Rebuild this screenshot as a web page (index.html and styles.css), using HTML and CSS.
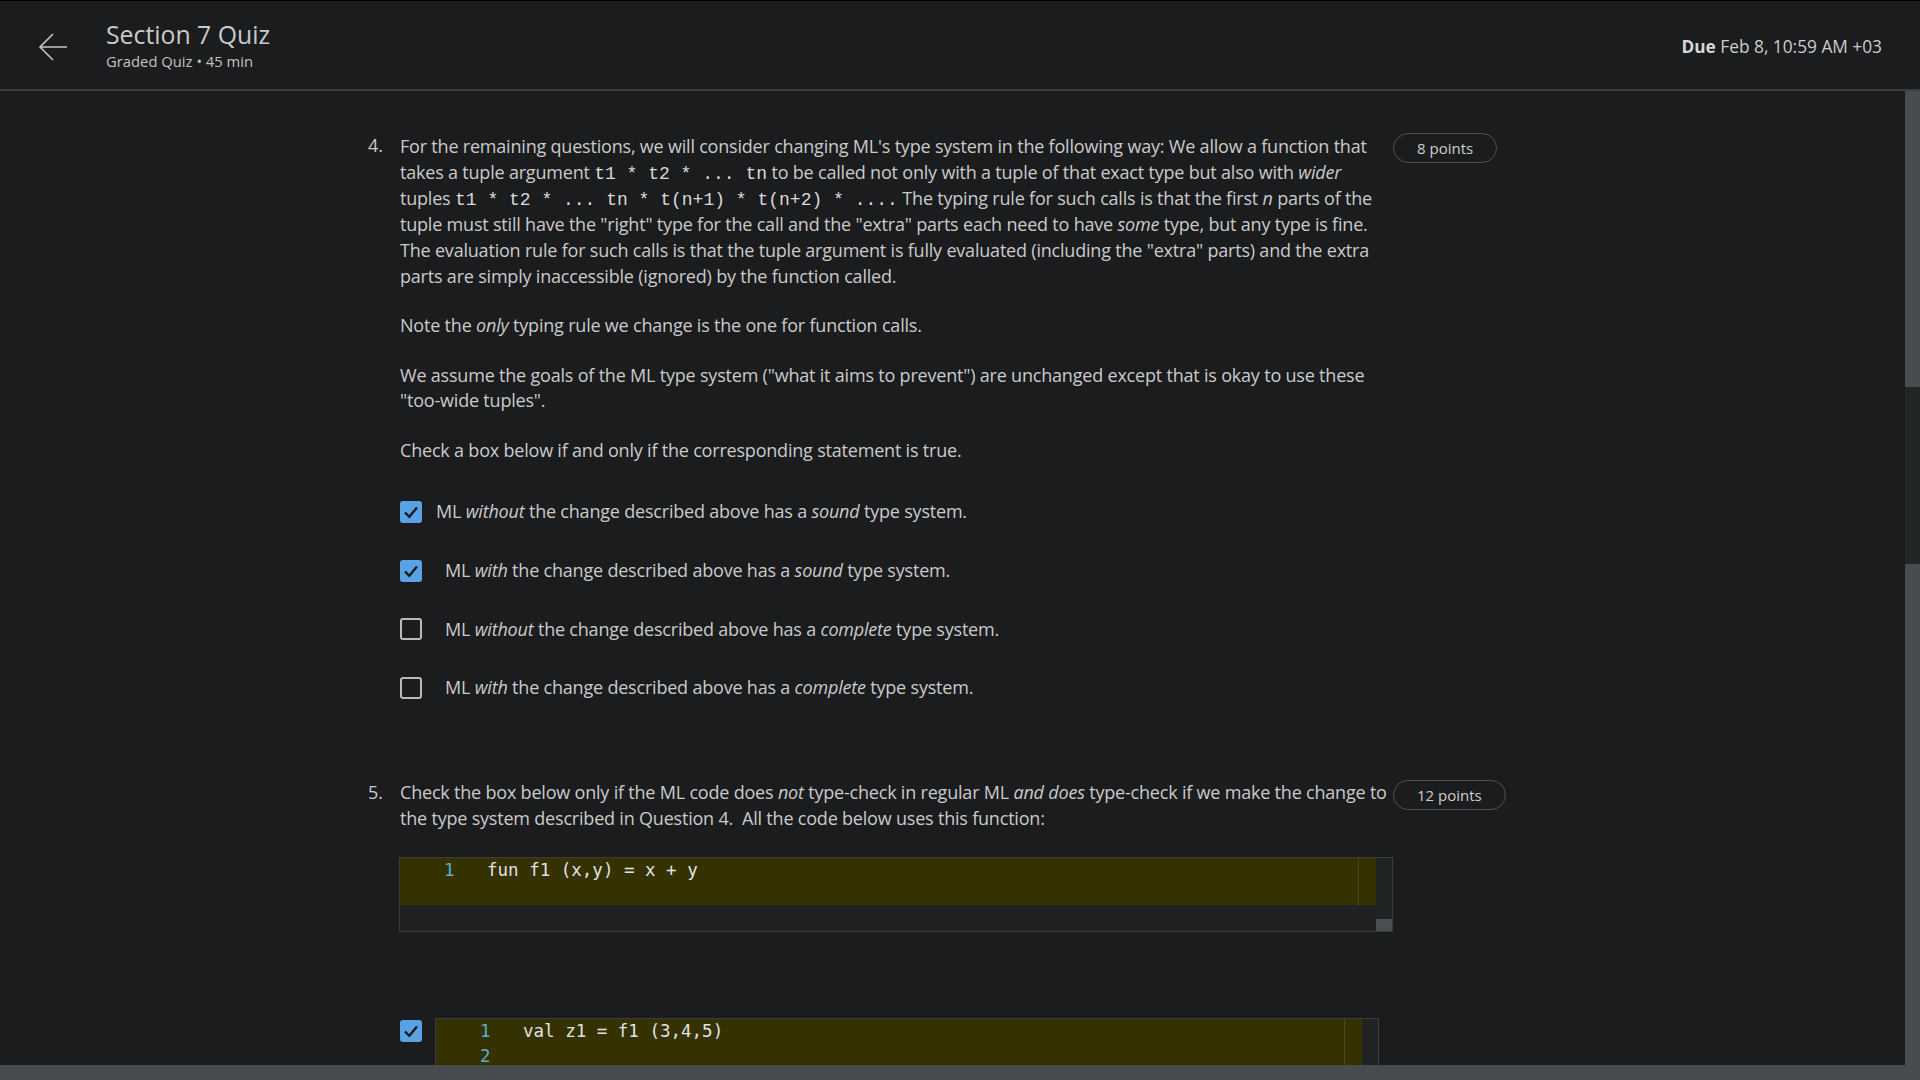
FILE: index.html
```html
<!DOCTYPE html>
<html lang="en">
<head>
<meta charset="utf-8">
<title>Section 7 Quiz</title>
<link rel="stylesheet" href="styles.css">
</head>
<body>
<header class="topbar">
  <a class="back" aria-label="Back">
    <svg width="30" height="30" viewBox="0 0 30 30"><path d="M29 15H2M15 2L2 15L15 28" fill="none" stroke="#c4c4c4" stroke-width="1.6"/></svg>
  </a>
  <div class="titles">
    <h1 class="title">Section 7 Quiz</h1>
    <div class="subtitle">Graded Quiz • 45 min</div>
  </div>
  <div class="due"><b>Due</b> Feb 8, 10:59 AM +03</div>
</header>
<div class="viewport">
  <div class="scroller">
    <main class="content">
      <section class="question q4">
        <div class="num">4.</div>
        <div class="qbody">
          <p class="lead">For the remaining questions, we will consider changing ML's type system in the following way: We allow a function that takes a tuple argument <code>t1 * t2 * ... tn</code> to be called not only with a tuple of that exact type but also with <em>wider</em> tuples <code>t1 * t2 * ... tn * t(n+1) * t(n+2) * ....</code> The typing rule for such calls is that the first <em>n</em> parts of the tuple must still have the "right" type for the call and the "extra" parts each need to have <em>some</em> type, but any type is fine. The evaluation rule for such calls is that the tuple argument is fully evaluated (including the "extra" parts) and the extra parts are simply inaccessible (ignored) by the function called.</p>
          <p>Note the <em>only</em> typing rule we change is the one for function calls.</p>
          <p>We assume the goals of the ML type system ("what it aims to prevent") are unchanged except that is okay to use these "too-wide tuples".</p>
          <p>Check a box below if and only if the corresponding statement is true.</p>
          <ul class="options">
            <li class="option first"><span class="box checked"><svg width="22" height="22" viewBox="0 0 22 22"><path d="M5 11.5L9.3 15.8L17 6.5" fill="none" stroke="#17191b" stroke-width="2.4"/></svg></span><span class="label">ML <em>without</em> the change described above has a <em>sound</em> type system.</span></li>
            <li class="option"><span class="box checked"><svg width="22" height="22" viewBox="0 0 22 22"><path d="M5 11.5L9.3 15.8L17 6.5" fill="none" stroke="#17191b" stroke-width="2.4"/></svg></span><span class="label">ML <em>with</em> the change described above has a <em>sound</em> type system.</span></li>
            <li class="option"><span class="box"></span><span class="label">ML <em>without</em> the change described above has a <em>complete</em> type system.</span></li>
            <li class="option"><span class="box"></span><span class="label">ML <em>with</em> the change described above has a <em>complete</em> type system.</span></li>
          </ul>
        </div>
        <div class="badge">8 points</div>
      </section>

      <section class="question q5">
        <div class="num">5.</div>
        <div class="qbody">
          <p>Check the box below only if the ML code does <em>not</em> type-check in regular ML <em>and does</em> type-check if we make the change to the type system described in Question 4.&nbsp; All the code below uses this function:</p>
          <div class="editor ed1">
            <div class="ed-main">
              <div class="ed-lines">
                <div class="ln"><span class="lno">1</span><span class="code">fun f1 (x,y) = x + y</span></div>
              </div>
              <div class="ed-margin"></div>
            </div>
            <div class="ed-vbar"><div class="ed-corner"></div></div>
            <div class="ed-hbar"></div>
          </div>
          <div class="code-option">
            <span class="box checked"><svg width="22" height="22" viewBox="0 0 22 22"><path d="M5 11.5L9.3 15.8L17 6.5" fill="none" stroke="#17191b" stroke-width="2.4"/></svg></span>
            <div class="editor ed2">
              <div class="ed-main">
                <div class="ed-lines">
                  <div class="ln"><span class="lno">1</span><span class="code">val z1 = f1 (3,4,5)</span></div>
                  <div class="ln"><span class="lno">2</span><span class="code"></span></div>
                  <div class="ln"><span class="lno">3</span><span class="code"></span></div>
                </div>
                <div class="ed-margin"></div>
              </div>
              <div class="ed-vbar"></div>
            </div>
          </div>
        </div>
        <div class="badge">12 points</div>
      </section>
    </main>
  </div>
  <div class="vbar"><div class="vthumb"></div></div>
</div>
<div class="hbar"></div>
</body>
</html>
```
FILE: styles.css
```css
* { box-sizing: border-box; }
html, body {
  margin: 0;
  height: 1080px;
  overflow: hidden;
  background: #1b1c1e;
  color: #cacaca;
  font-family: "Open Sans", "Noto Sans", sans-serif;
}
body { display: flex; flex-direction: column; }

.topbar {
  flex: none;
  height: 91px;
  border-top: 1px solid #000;
  border-bottom: 2px solid #3c3d3f;
  display: flex;
  align-items: flex-start;
  padding: 0 38px 0 38px;
  background: #1b1c1e;
}
.back { display: block; width: 30px; height: 30px; margin-top: 31px; }
.back svg { display: block; }
.titles { margin-left: 38px; padding-top: 17px; }
.title {
  margin: 0;
  font-size: 24.8px;
  line-height: 32px;
  font-weight: 400;
  color: #cacaca;
}
.subtitle {
  margin-top: 2px;
  font-size: 14.8px;
  line-height: 19px;
  color: #c2c2c2;
}
.due {
  margin-left: auto;
  margin-top: 34px;
  font-size: 17.3px;
  line-height: 24px;
  color: #cdcdcd;
}
.due b { font-weight: 700; color: #d6d6d6; }

.viewport { flex: 1; display: flex; min-height: 0; }
.scroller { flex: 1; overflow: hidden; }
.vbar { flex: none; width: 15px; background: #474c4f; }
.vthumb { margin-top: 296px; height: 177px; background: #222526; }
.hbar { flex: none; height: 15px; background: #464b4e; }

.content { padding: 42px 0 0 368px; }

.question {
  display: flex;
  align-items: flex-start;
  font-size: 18px;
  line-height: 25.6px;
  letter-spacing: -0.2px;
}
.q4 { margin-bottom: 62.8px; }
.num { flex: none; width: 32px; letter-spacing: 0; }
.qbody { flex: none; width: 993px; }
.qbody p { margin: 0 0 24px; }
.qbody p.lead { line-height: 26px; }
.qbody p:last-of-type { margin-bottom: 0; }
.q5 .qbody p { margin-bottom: 0; }
em { font-style: italic; }
code {
  font-family: "Liberation Mono", "DejaVu Sans Mono", monospace;
  font-size: 18px;
  line-height: 1;
  letter-spacing: 0;
  color: #dadada;
}

.badge {
  flex: none;
  height: 30px;
  line-height: 28px;
  border: 1px solid #4f5052;
  border-radius: 15px;
  padding: 0 23px;
  font-size: 15px;
  letter-spacing: 0;
  color: #cfcfcf;
  white-space: nowrap;
}

.options { list-style: none; margin: 19.3px 0 0; padding: 0; }
.option { height: 58.7px; display: flex; align-items: center; }
.option .label { margin-left: 23px; }
.option.first .label { margin-left: 14px; }

.box {
  flex: none;
  width: 22px;
  height: 22px;
  border: 2px solid #bdbab4;
  border-radius: 3px;
  display: block;
}
.box.checked { border: none; background: #5aa2e6; }
.box svg { display: block; }

.editor {
  border: 1px solid #3a3c3e;
  background: #1f2123;
  display: grid;
  grid-template-columns: 1fr 16px;
  letter-spacing: 0;
}
.ed1 {
  width: 994px;
  margin: 25.8px 0 0 -1px;
  grid-template-rows: 47px 26px;
}
.ed2 {
  width: 944px;
  margin-left: 13px;
  grid-template-rows: 90px;
}
.ed-main { display: flex; background: #353100; grid-column: 1; grid-row: 1; }
.ed-lines { flex: 1; border-right: 1px solid #4a4820; }
.ed-margin { width: 17px; flex: none; }
.ed-vbar { grid-column: 2; grid-row: 1 / span 2; background: #202324; display: flex; flex-direction: column; justify-content: flex-end; }
.ed-corner { height: 12px; background: #4a4f52; }
.ed-hbar { grid-column: 1; grid-row: 2; background: #1f2123; }

.ln {
  display: flex;
  height: 25px;
  line-height: 25px;
  font-family: "DejaVu Sans Mono", monospace;
  font-size: 17.5px;
}
.lno { width: 87px; padding-left: 44px; color: #58aed0; flex: none; }
.code { color: #e2e2e2; white-space: pre; }

.code-option { display: flex; align-items: flex-start; margin-top: 86px; }
.code-option .box { margin-top: 2px; }
```
